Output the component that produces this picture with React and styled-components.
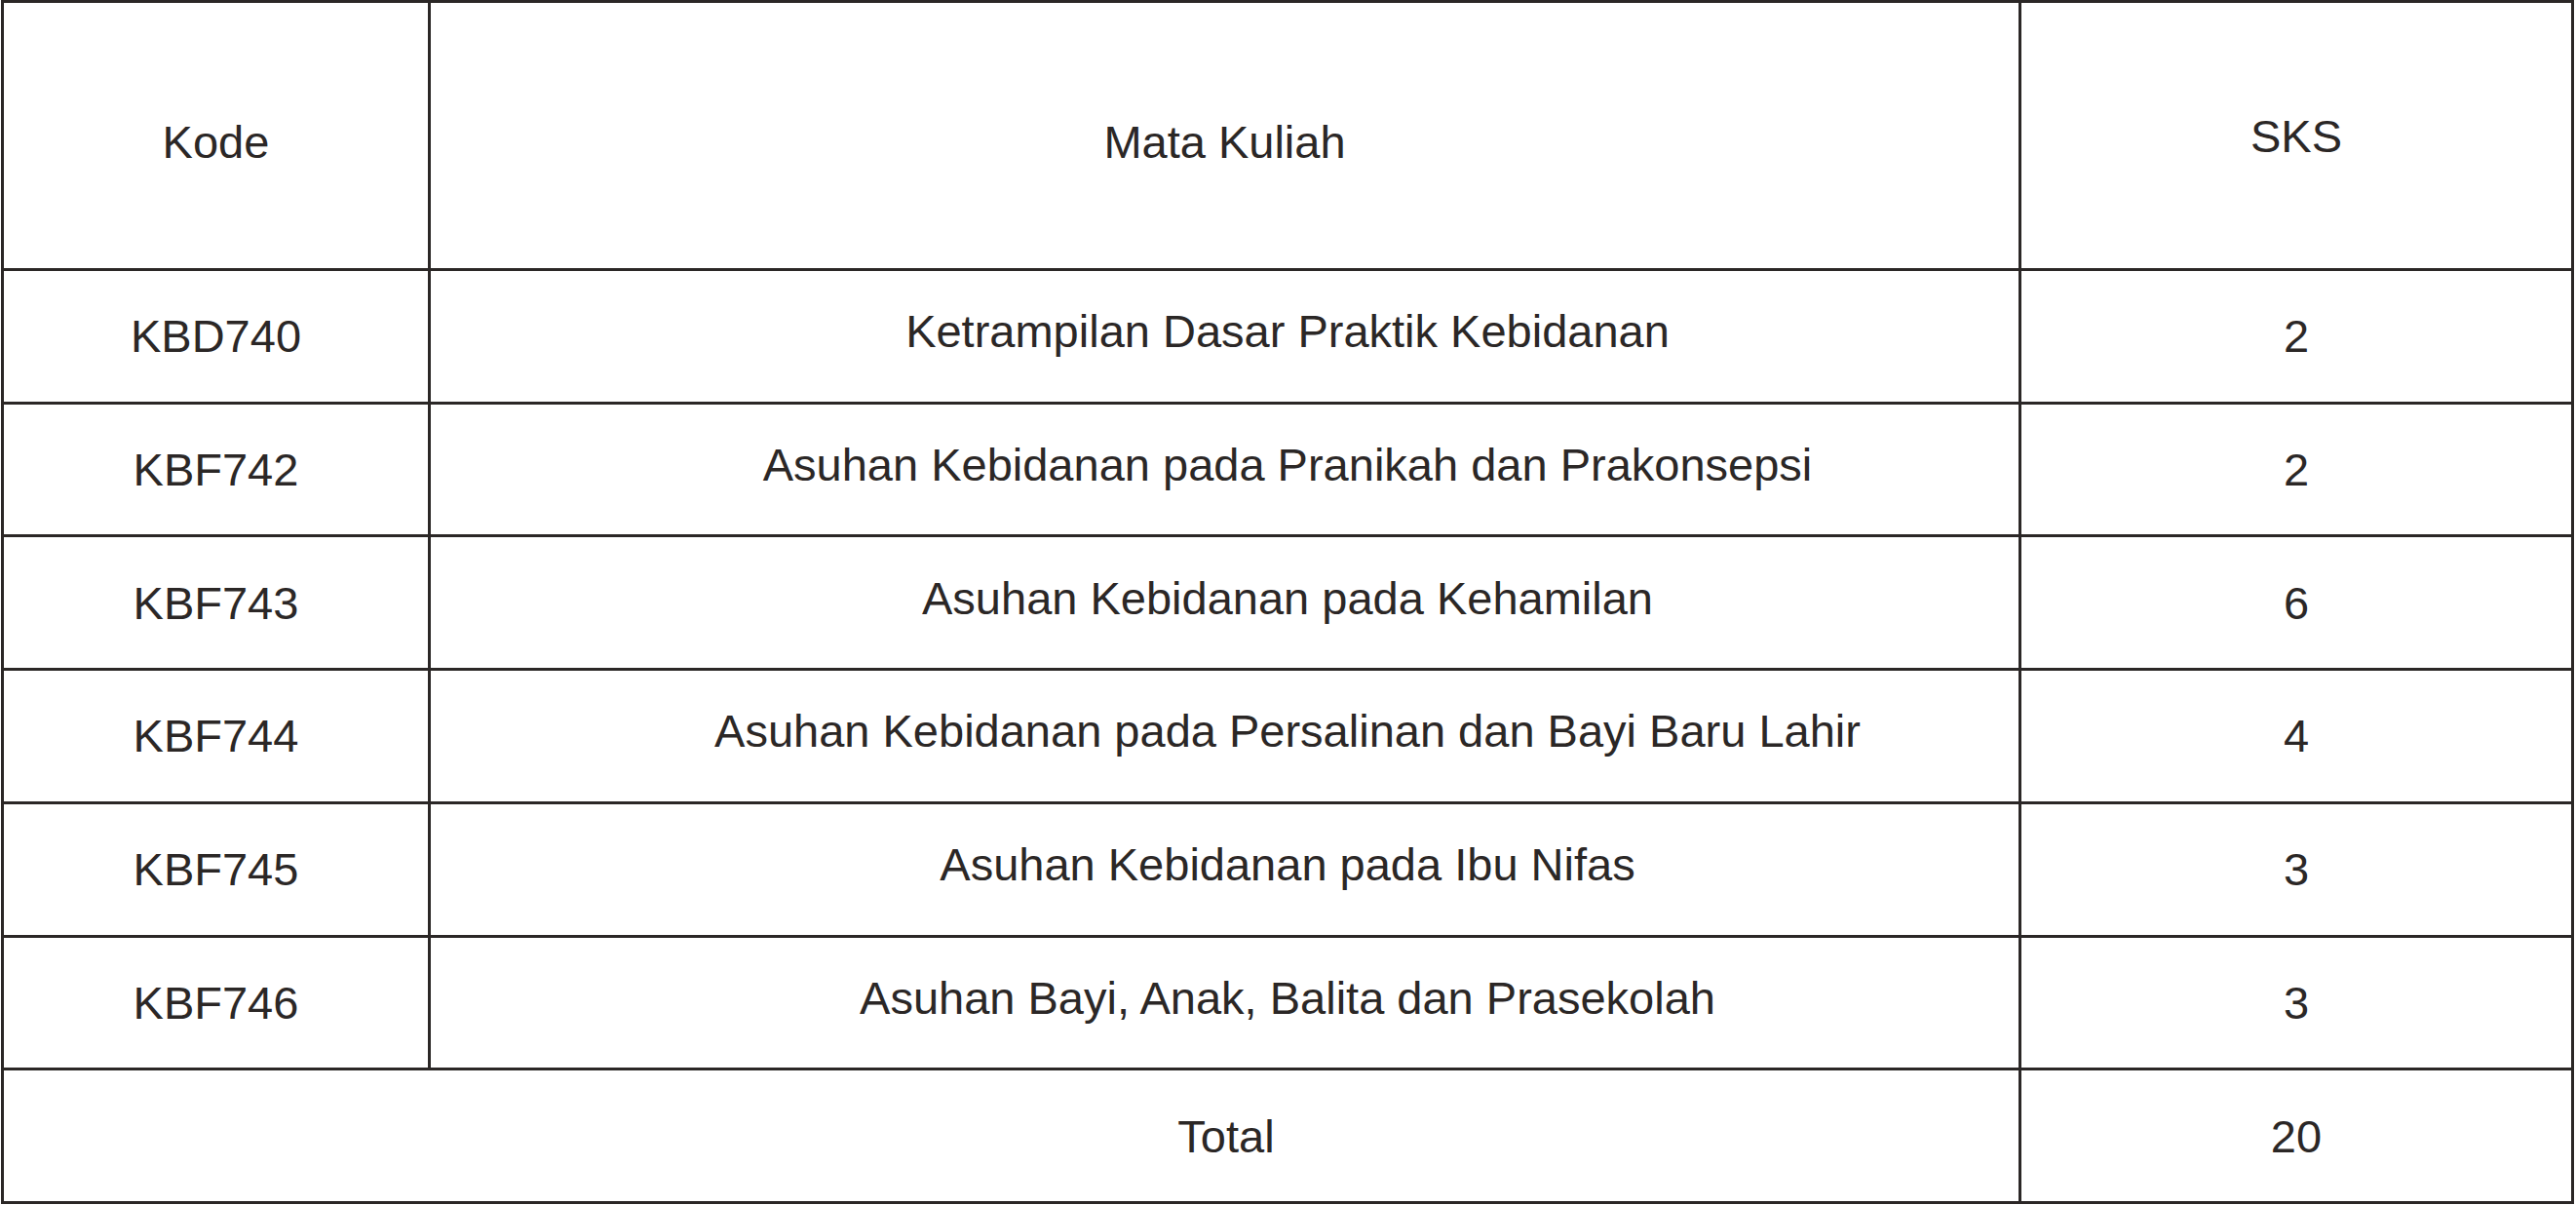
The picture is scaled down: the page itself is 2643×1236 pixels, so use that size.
import styled, { createGlobalStyle } from 'styled-components'

const courses = [
	{ code: 'KBD740', name: 'Ketrampilan Dasar Praktik Kebidanan', sks: 2 },
	{ code: 'KBF742', name: 'Asuhan Kebidanan pada Pranikah dan Prakonsepsi', sks: 2 },
	{ code: 'KBF743', name: 'Asuhan Kebidanan pada Kehamilan', sks: 6 },
	{ code: 'KBF744', name: 'Asuhan Kebidanan pada Persalinan dan Bayi Baru Lahir', sks: 4 },
	{ code: 'KBF745', name: 'Asuhan Kebidanan pada Ibu Nifas', sks: 3 },
	{ code: 'KBF746', name: 'Asuhan Bayi, Anak, Balita dan Prasekolah', sks: 3 },
]

const GlobalStyle = createGlobalStyle`
	html, body {
		margin: 0;
		padding: 0;
		background: #ffffff;
	}
	body {
		font-family: "Liberation Sans", Arial, sans-serif;
		color: #2b2726;
	}
`

const LINE = '3px solid #2b2726'

const Page = styled.div`
	padding: 0 0 0 1px;
`

const Table = styled.div`
	display: grid;
	grid-template-columns: 438px 1632px 567px;
	grid-template-rows: 275px repeat(7, 1fr);
	width: 2640px;
	height: 1235px;
	box-sizing: border-box;
	border-left: ${LINE};
	border-top: ${LINE};
	background: #fff;
`

const Cell = styled.div`
	display: flex;
	align-items: center;
	justify-content: center;
	box-sizing: border-box;
	border-right: ${LINE};
	border-bottom: ${LINE};
	font-size: 47px;
	white-space: nowrap;
	grid-column: span ${p => p.$span || 1};
	padding-left: ${p => p.$indent || 0}px;
	padding-top: ${p => Math.max(0, (p.$shift || 0) * 2)}px;
	padding-bottom: ${p => Math.max(0, -(p.$shift || 0) * 2)}px;
`

const App = () => {
	const total = courses.reduce((sum, c) => sum + c.sks, 0)

	return (
		<>
			<GlobalStyle />
			<Page>
				<Table>
					<Cell $shift={6}>Kode</Cell>
					<Cell $shift={6}>Mata Kuliah</Cell>
					<Cell>SKS</Cell>

					{courses.map(course => (
						<Row key={course.code} course={course} />
					))}

					<Cell $span={2} $indent={441}>Total</Cell>
					<Cell>{total}</Cell>
				</Table>
			</Page>
		</>
	)
}

const Row = ({ course }) => {
	return (
		<>
			<Cell>{course.code}</Cell>
			<Cell $indent={129} $shift={-5}>{course.name}</Cell>
			<Cell>{course.sks}</Cell>
		</>
	)
}

export default App
